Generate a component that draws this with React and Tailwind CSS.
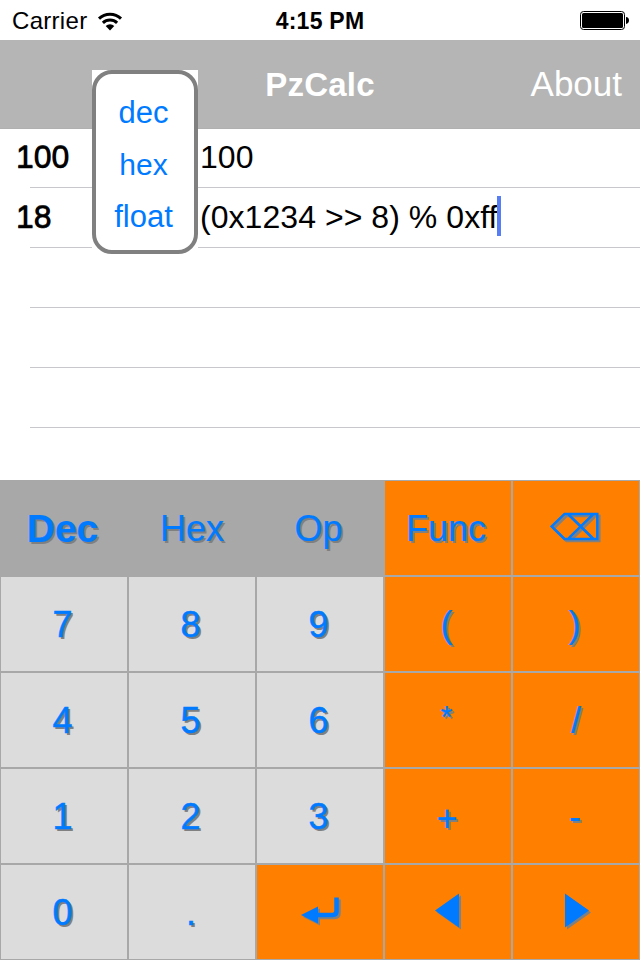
const SHADOW = "[text-shadow:2px_2px_0_#808080]";

function Wifi() {
  return (
    <svg className="ml-[10px] mt-[1px] h-[19px] w-[26px]" viewBox="0 0 26 19">
      <g fill="none" stroke="#000" strokeWidth="3">
        <path d="M2 6.6a15.8 15.8 0 0 1 22 0" />
        <path d="M5.9 10.8a10.2 10.2 0 0 1 14.2 0" />
      </g>
      <path d="M8.7 14a6.2 6.2 0 0 1 8.6 0L13 18.4z" />
    </svg>
  );
}

function Battery() {
  return (
    <svg className="h-[19px] w-[49px]" viewBox="0 0 49 19">
      <rect x="0.5" y="0.5" width="44" height="18" rx="3" fill="#fff" stroke="#000" />
      <rect x="2" y="2" width="41" height="15" rx="1.5" />
      <path d="M46 6a3.5 3.5 0 0 1 3 3.5a3.5 3.5 0 0 1-3 3.5z" />
    </svg>
  );
}

function Icon({ points, d, stroke }) {
  return (
    <svg className="block h-[94px] w-[126px]" viewBox="1 1 126 94">
      {["#808080", "#007aff"].map((c, i) => (
        <g key={c} transform={i === 0 ? "translate(2 2)" : undefined}>
          {points && <polygon points={points} fill={c} />}
          {d && <path d={d} fill="none" stroke={c} strokeWidth={stroke} />}
        </g>
      ))}
    </svg>
  );
}

function Key({ tone = "digit", label, className = "", children }) {
  const bg = tone === "op" ? "bg-[#ff8000]" : tone === "mode" ? "bg-[#a8a8a8]" : "bg-[#dcdcdc]";
  const weight = tone === "digit" ? "[-webkit-text-stroke:0.5px_#007aff]" : "[-webkit-text-stroke:0.2px_#007aff]";
  return (
    <button className={`flex items-center justify-center border border-[#a8a8a8] text-[36px] leading-[40px] text-[#007aff] ${bg}`}>
      {children || <span className={`block pr-[3px] pt-px ${SHADOW} ${weight} ${className}`}>{label}</span>}
    </button>
  );
}

function Row({ result, expr, cursor }) {
  return (
    <div className="flex pl-[16px] pt-[8px] leading-[40px]">
      <div className="w-[184px] [-webkit-text-stroke:0.5px_#000] [text-shadow:0_-1px_0_#444]">{result}</div>
      <div className="flex items-start tracking-[0.05px]">
        {expr}
        {cursor && <span className="-mt-px h-[40px] w-[4px] bg-[#567df4]" />}
      </div>
    </div>
  );
}

const ROWS = [
  { result: "100", expr: "100" },
  { result: "18", expr: "(0x1234 >> 8) % 0xff", cursor: true },
  {},
  {},
  {},
];

export default function App() {
  return (
    <div className="relative flex h-[960px] w-[640px] flex-col overflow-hidden bg-white font-['Liberation_Sans',Arial,sans-serif] text-black">
      <header className="grid h-[40px] grid-cols-[1fr_auto_1fr] items-center text-[24px] leading-[40px]">
        <div className="flex items-center pl-[12px] pt-px">
          <span className="tracking-[0.3px]">Carrier</span>
          <Wifi />
        </div>
        <span className="pt-px text-[23px] font-bold tracking-[0.25px]">4:15 PM</span>
        <div className="flex justify-end pr-[11px]">
          <Battery />
        </div>
      </header>
      <nav className="grid h-[89px] grid-cols-[1fr_auto_1fr] items-center border-b border-[#b0b0b0] bg-[#b5b5b5] text-[35px] text-white">
        <span />
        <h1 className="pt-[2px] text-[33px] font-bold tracking-[0.2px]">PzCalc</h1>
        <span className="justify-self-end pr-[18px]">About</span>
      </nav>
      <main className="h-[351px] text-[32px]">
        {ROWS.map((r, i) => (
          <div key={i} className={i === 0 ? "h-[59px]" : "h-[60px]"}>
            <div className={i === 0 ? "h-[58px]" : "h-[59px] pt-px"}>
              <Row {...r} />
            </div>
            <div className="ml-[30px] h-px bg-[#c8c7cc]" />
          </div>
        ))}
      </main>
      <section className="grid h-[480px] grid-cols-5 grid-rows-5">
        <Key tone="mode" label="Dec" className="text-[39px] font-bold" />
        <Key tone="mode" label="Hex" className="!pr-0" />
        <Key tone="mode" label="Op" />
        <Key tone="op" label="Func" className="!pr-[4px]" />
        <Key tone="op">
          <Icon d="M39.7 46.5L52.5 34H85.3V59H52.5ZM56.5 34.5L81 58.5M81 34.5L56.5 58.5" stroke="2.5" />
        </Key>
        <Key label="7" />
        <Key label="8" />
        <Key label="9" />
        <Key tone="op" label="(" />
        <Key tone="op" label=")" />
        <Key label="4" />
        <Key label="5" />
        <Key label="6" />
        <Key tone="op" label="*" className="!pt-0 pb-[5px] text-[31px]" />
        <Key tone="op" label="/" className="!pr-0" />
        <Key label="1" />
        <Key label="2" />
        <Key label="3" />
        <Key tone="op" label="+" className="!pr-[2px] !pt-[5px]" />
        <Key tone="op" label="-" className="!pr-[2px]" />
        <Key label="0" />
        <Key label="." className="!pr-[2px]" />
        <Key tone="op">
          <Icon points="45,51 62,42.5 62,59.5" d="M61 51H76.5Q80.5 51 80.5 47V33.5" stroke="4.5" />
        </Key>
        <Key tone="op">
          <Icon points="51,46.5 75,29.5 75,63.5" />
        </Key>
        <Key tone="op">
          <Icon points="53,29.5 77,46.5 53,63.5" />
        </Key>
      </section>
      <div className="absolute left-[92px] top-[70px] h-[184px] w-[106px] bg-white">
        <div className="flex h-full flex-col items-center rounded-[20px] border-4 border-[#808080] pr-[3px] pt-[13px] text-[31px] leading-[52px] text-[#007aff]">
          <span>dec</span>
          <span className="text-[30px]">hex</span>
          <span>float</span>
        </div>
      </div>
    </div>
  );
}
